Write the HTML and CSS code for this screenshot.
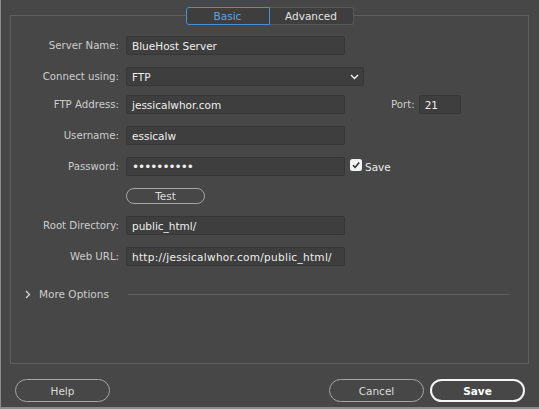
FILE: index.html
```html
<!DOCTYPE html>
<html>
<head>
<meta charset="utf-8">
<title>Site Setup - Server</title>
<link rel="stylesheet" href="styles.css">
</head>
<body>
<div class="dialog">
  <div class="tabs">
    <div class="tab active">Basic</div>
    <div class="tab">Advanced</div>
  </div>
  <div class="panel">
    <div class="form">
      <div class="lbl">Server Name:</div>
      <div class="cell"><div class="field std">BlueHost Server</div></div>

      <div class="lbl">Connect using:</div>
      <div class="cell">
        <div class="field select">
          <span>FTP</span>
          <svg class="chev-down" width="9" height="6" viewBox="0 0 9 6"><path d="M1 1 L4.5 4.5 L8 1" fill="none" stroke="#f2f2f2" stroke-width="1.4"/></svg>
        </div>
      </div>

      <div class="lbl tight">FTP Address:</div>
      <div class="cell tight">
        <div class="field std">jessicalwhor.com</div>
        <div class="lbl port-lbl">Port:</div>
        <div class="field port">21</div>
      </div>

      <div class="lbl">Username:</div>
      <div class="cell"><div class="field std">essicalw</div></div>

      <div class="lbl">Password:</div>
      <div class="cell">
        <div class="field std dots">••••••••••</div>
        <div class="check">
          <svg width="12" height="12" viewBox="0 0 12 12"><rect x="0" y="0" width="12" height="12" rx="2.5" fill="#f2f2f2"/><path d="M3 6.2 L5.1 8.4 L9.2 3.4" fill="none" stroke="#2e2e2e" stroke-width="1.6"/></svg>
        </div>
        <div class="save-lbl">Save</div>
      </div>

      <div class="lbl"></div>
      <div class="cell"><div class="btn test">Test</div></div>

      <div class="lbl">Root Directory:</div>
      <div class="cell"><div class="field std">public_html/</div></div>

      <div class="lbl">Web URL:</div>
      <div class="cell"><div class="field std url">http://jessicalwhor.com/public_html/</div></div>
    </div>
    <div class="more">
      <svg class="chev-right" width="6" height="9" viewBox="0 0 6 9"><path d="M1 1 L4.5 4.5 L1 8" fill="none" stroke="#d8d8d8" stroke-width="1.3"/></svg>
      <span class="more-text">More Options</span>
      <div class="more-line"></div>
    </div>
  </div>
  <div class="footer">
    <div class="btn big">Help</div>
    <div class="spacer"></div>
    <div class="btn big">Cancel</div>
    <div class="btn big primary">Save</div>
  </div>
</div>
</body>
</html>
```

FILE: styles.css
```css
html, body {
  margin: 0;
  padding: 0;
  background: #474747;
}

body {
  font-family: "DejaVu Sans", "Liberation Sans", sans-serif;
  font-size: 10.5px;
  color: #e8e8e8;
}

.dialog {
  width: 539px;
  height: 409px;
  box-sizing: border-box;
  background: #474747;
  border-left: 1px solid #8c8c8c;
  border-bottom: 2px solid #8c8c8c;
  padding: 7px 10px 0 9px;
  display: flex;
  flex-direction: column;
}

.tabs {
  display: flex;
  justify-content: center;
  margin-bottom: -10px;
  position: relative;
  z-index: 1;
}

.tab {
  width: 84px;
  height: 18px;
  box-sizing: border-box;
  display: flex;
  align-items: center;
  justify-content: center;
  background: #3e3e3e;
  border: 1px solid #5a5a5a;
  color: #e4e4e4;
  font-size: 10.5px;
}

.tab:first-child {
  border-radius: 3px 0 0 3px;
}

.tab:last-child {
  border-radius: 0 3px 3px 0;
  border-left: none;
}

.tab.active {
  border-color: #4a8fd6;
  color: #5ea3ea;
}

.panel {
  height: 349px;
  box-sizing: border-box;
  border: 1px solid #5e5e5e;
  display: flex;
  flex-direction: column;
}

.form {
  display: grid;
  grid-template-columns: 108px 1fr;
  column-gap: 7px;
  row-gap: 12px;
  align-items: center;
  padding-top: 20px;
}

.lbl {
  text-align: right;
  color: #cdcdcd;
  white-space: nowrap;
  font-size: 10.2px;
}

.tight {
  margin-top: -3px;
}

.cell {
  display: flex;
  align-items: center;
}

.field {
  height: 19px;
  box-sizing: border-box;
  background: #3e3e3e;
  border: 1px solid #363636;
  border-radius: 2px;
  padding: 0 5px;
  display: flex;
  align-items: center;
  color: #efefef;
  white-space: nowrap;
}

.std {
  width: 219px;
}

.url {
  letter-spacing: 0.3px;
}

.select {
  width: 238px;
  justify-content: space-between;
  padding-right: 4px;
}

.chev-down {
  display: block;
}

.port-lbl {
  margin-left: 46px;
  margin-right: 4px;
}

.port {
  width: 42px;
}

.dots {
  letter-spacing: -1px;
  font-size: 12px;
}

.check {
  margin-left: 5px;
  margin-top: -3px;
  display: flex;
}

.save-lbl {
  margin-left: 3px;
  color: #ececec;
}

.btn {
  box-sizing: border-box;
  display: flex;
  align-items: center;
  justify-content: center;
  border: 1px solid #a6a6a6;
  color: #dcdcdc;
}

.test {
  width: 79px;
  height: 16px;
  border-radius: 8px;
}

.more {
  display: flex;
  align-items: center;
  margin-top: 21px;
  padding-left: 14px;
  padding-right: 18px;
  height: 14px;
}

.chev-right {
  display: block;
}

.more-text {
  margin-left: 8px;
  color: #cdcdcd;
}

.more-line {
  flex: 1;
  height: 1px;
  background: #5e5e5e;
  margin-left: 19px;
}

.footer {
  display: flex;
  align-items: center;
  margin-top: 15px;
  padding: 0 4px 0 5px;
  gap: 6px;
}

.spacer {
  flex: 1;
}

.big {
  width: 95px;
  height: 23px;
  border-radius: 12px;
  font-size: 10.5px;
}

.primary {
  border: 2px solid #f4f4f4;
  color: #ffffff;
  font-weight: bold;
}
```
